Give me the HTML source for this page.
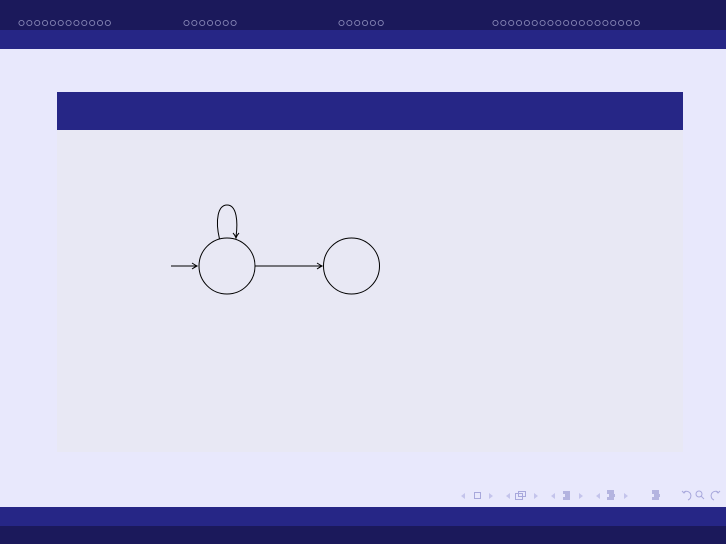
<!DOCTYPE html>
<html><head><meta charset="utf-8"><style>
html,body{margin:0;padding:0;width:726px;height:544px;overflow:hidden;background:#e8e8fc;font-family:"Liberation Sans",sans-serif}
</style></head><body>
<svg width="726" height="544" xmlns="http://www.w3.org/2000/svg" style="position:absolute;left:0;top:0">
<rect x="0" y="0" width="726" height="30" fill="#1b195b"/>
<rect x="0" y="30" width="726" height="19" fill="#262686"/>
<g fill="none" stroke="#8585b5" stroke-width="0.9" id="dots"></g>
<rect x="57" y="92" width="626" height="38" fill="#262686"/>
<rect x="57" y="130" width="626" height="322" fill="#e8e8f4"/>
<g fill="none" stroke="#000" stroke-width="1">
<circle cx="227" cy="266" r="28"/>
<circle cx="351.5" cy="266" r="28"/>
<line x1="171" y1="266" x2="196" y2="266"/>
<path d="M192,263 Q195,265 197,266 Q195,267 192,269"/>
<line x1="255" y1="266" x2="321" y2="266"/>
<path d="M317,263 Q320,265 322,266 Q320,267 317,269"/>
<path d="M219.5,239 C215,220 218,205 227,205 C237,205 238,222 236,237"/>
<path d="M233,233 Q235,235 236,238 Q237,235 239,233"/>
</g>
<rect x="0" y="507" width="726" height="19" fill="#262686"/>
<rect x="0" y="526" width="726" height="18" fill="#1b195b"/>
<g fill="#c4c4ec" stroke="none">
<path d="M461,496 l4,-3 v6z"/><path d="M493,496 l-4,-3 v6z"/>
<path d="M506,496 l4,-3 v6z"/><path d="M538,496 l-4,-3 v6z"/>
<path d="M551,496 l4,-3 v6z"/><path d="M583,496 l-4,-3 v6z"/>
<path d="M596,496 l4,-3 v6z"/><path d="M628,496 l-4,-3 v6z"/>
</g>
<g fill="none" stroke="#a8a8dc" stroke-width="1">
<rect x="474.5" y="492.5" width="6" height="6"/>
<rect x="515.5" y="493.5" width="7" height="6"/><rect x="518.5" y="491.5" width="7" height="5"/>
<path d="M684,492 A4.5,4.5 0 1 1 688,500"/><path d="M682,491 l2,2 2,-2"/>
<circle cx="699" cy="494" r="3"/><path d="M701,496 l3,3"/>
<path d="M718,492 A4.5,4.5 0 1 0 714,500"/><path d="M720,491 l-2,2 -2,-2"/>
</g>
<g fill="#b4b4e0">
<rect x="563" y="491" width="7" height="3"/><rect x="565" y="494" width="5" height="3"/><rect x="563" y="497" width="7" height="3"/>
<rect x="607" y="490" width="7" height="4"/><rect x="609" y="494" width="6" height="3"/><rect x="607" y="497" width="7" height="3"/>
<rect x="652" y="490" width="7" height="4"/><rect x="654" y="494" width="6" height="3"/><rect x="652" y="497" width="7" height="3"/>
</g>
</svg>
<script>
var g=document.getElementById('dots'),ns="http://www.w3.org/2000/svg";
[[21.5,12],[186.5,7],[341.5,6],[495.5,19]].forEach(function(a){for(var i=0;i<a[1];i++){var c=document.createElementNS(ns,'circle');c.setAttribute('cx',a[0]+i*7.85);c.setAttribute('cy',23);c.setAttribute('r',2.6);g.appendChild(c);}});
</script>
</body></html>
